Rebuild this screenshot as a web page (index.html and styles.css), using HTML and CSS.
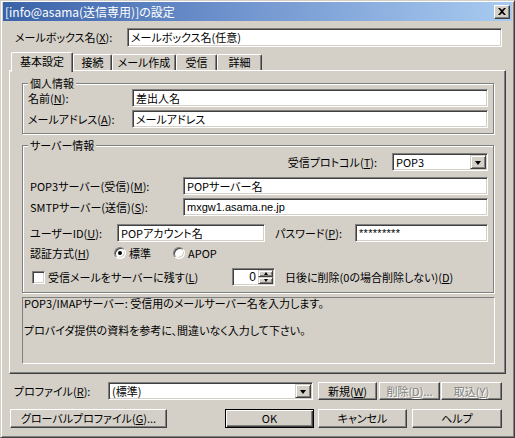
FILE: index.html
```html
<!DOCTYPE html>
<html lang="ja">
<head>
<meta charset="utf-8">
<title>[info@asama(送信専用)]の設定</title>
<link rel="stylesheet" href="styles.css">
</head>
<body>
<div class="window">
  <div class="titlebar">
    <span class="title">[info@asama(送信専用)]の設定</span>
    <span class="closebtn"><svg width="8" height="7" viewBox="0 0 8 7"><path d="M0 0h2l2 2 2-2h2L5 3.5 8 7H6L4 5 2 7H0l3-3.5z" fill="#000"/></svg></span>
  </div>
  <div class="content">
    <div class="mailbox-row">
      <span class="lbl w-mailbox">メールボックス名(<u>X</u>):</span>
      <div class="edit e-mailbox">メールボックス名(任意)</div>
    </div>
    <div class="tabs">
      <div class="tab sel t1">基本設定</div>
      <div class="tab t2">接続</div>
      <div class="tab t3">メール作成</div>
      <div class="tab t4">受信</div>
      <div class="tab t5">詳細</div>
    </div>
    <div class="panel">
      <fieldset class="group g1">
        <legend>個人情報</legend>
        <div class="row">
          <span class="lbl w-g1">名前(<u>N</u>):</span>
          <div class="edit grow">差出人名</div>
        </div>
        <div class="row r-gap3">
          <span class="lbl w-g1">メールアドレス(<u>A</u>):</span>
          <div class="edit grow">メールアドレス</div>
        </div>
      </fieldset>
      <fieldset class="group g2">
        <legend>サーバー情報</legend>
        <div class="row r-proto">
          <span class="lbl proto-lbl">受信プロトコル(<u>T</u>):</span>
          <div class="combo c-proto"><span class="combo-text">POP3</span><span class="dropbtn"><span class="tri-down"></span></span></div>
        </div>
        <div class="row r-pop">
          <span class="lbl w-srv">POP3サーバー(受信)(<u>M</u>):</span>
          <div class="edit grow">POPサーバー名</div>
        </div>
        <div class="row r-gap3 r-in">
          <span class="lbl w-srv">SMTPサーバー(送信)(<u>S</u>):</span>
          <div class="edit grow latin">mxgw1.asama.ne.jp</div>
        </div>
        <div class="row r-user r-in">
          <span class="lbl w-user">ユーザーID(<u>U</u>):</span>
          <div class="edit e-user">POPアカウント名</div>
          <span class="lbl w-pass">パスワード(<u>P</u>):</span>
          <div class="edit grow pass">*********</div>
        </div>
        <div class="row r-auth r-in">
          <span class="lbl w-auth">認証方式(<u>H</u>)</span>
          <span class="radio on"></span><span class="opt">標準</span>
          <span class="radio r2"></span><span class="opt">APOP</span>
        </div>
        <div class="row r-keep r-in">
          <span class="check"></span>
          <span class="lbl w-keep">受信メールをサーバーに残す(<u>L</u>)</span>
          <div class="spin"><span class="spin-val">0</span><span class="spin-btns"><span class="spin-up"><span class="tri-up-s"></span></span><span class="spin-dn"><span class="tri-down-s"></span></span></span></div>
          <span class="lbl days">日後に削除(0の場合削除しない)(<u>D</u>)</span>
        </div>
      </fieldset>
      <div class="info">
        <p class="l1">POP3/IMAPサーバー: 受信用のメールサーバー名を入力します。</p>
        <p class="l2">プロバイダ提供の資料を参考に、間違いなく入力して下さい。</p>
      </div>
    </div>
    <div class="profile-row">
      <span class="lbl w-prof">プロファイル(<u>R</u>):</span>
      <div class="combo c-prof"><span class="combo-text">(標準)</span><span class="dropbtn"><span class="tri-down"></span></span></div>
      <div class="btn b-new">新規(<u>W</u>)</div>
      <div class="btn dis b-del">削除(<u>D</u>)...</div>
      <div class="btn dis b-imp">取込(<u>Y</u>)</div>
    </div>
    <div class="button-row">
      <div class="btn b-global">グローバルプロファイル(<u>G</u>)...</div>
      <div class="btn def b-ok">OK</div>
      <div class="btn b-cancel">キャンセル</div>
      <div class="btn b-help">ヘルプ</div>
    </div>
  </div>
</div>
</body>
</html>
```
FILE: styles.css
```css
* { box-sizing: border-box; }
html, body { margin: 0; padding: 0; }
body {
  width: 515px;
  height: 438px;
  overflow: hidden;
  background: #d4d0c8;
  font-family: "Noto Sans CJK JP", "DejaVu Sans", sans-serif;
  font-size: 11px;
  font-weight: 400;
  font-feature-settings: "palt";
  color: #000;
}
u { text-decoration: underline; text-underline-offset: 1px; }

.window {
  width: 515px;
  height: 438px;
  background: #d4d0c8;
  border: 1px solid;
  border-color: #d4d0c8 #404040 #404040 #d4d0c8;
  box-shadow: inset 1px 1px #fff, inset -1px -1px #808080;
  padding: 1px 2px 2px 2px;
  display: flex;
  flex-direction: column;
}

.titlebar {
  height: 19px;
  flex: none;
  display: flex;
  align-items: center;
  padding: 0 2px 0 2px;
  background: linear-gradient(to right, #3a62a8 0%, #6f93cd 45%, #a8cbf1 100%);
}
.title {
  color: #fff;
  font-size: 12px;
  line-height: 14px;
  white-space: nowrap;
}
.closebtn {
  margin-left: auto;
  width: 16px;
  height: 14px;
  background: #d4d0c8;
  border: 1px solid;
  border-color: #fff #404040 #404040 #fff;
  box-shadow: inset -1px -1px #808080;
  display: flex;
  align-items: center;
  justify-content: center;
}
.closebtn svg { display: block; margin: 0 1px 1px 0; }

.content {
  flex: 1;
  display: flex;
  flex-direction: column;
}

.lbl { white-space: nowrap; flex: none; line-height: 13px; }

.edit, .combo, .spin {
  background: #fff;
  border: 1px solid;
  border-color: #808080 #fff #fff #808080;
  box-shadow: inset 1px 1px #404040, inset -1px -1px #d4d0c8;
  height: 18px;
  padding: 0 3px;
  display: flex;
  align-items: center;
  white-space: nowrap;
  overflow: hidden;
  line-height: 13px;
  flex: none;
}
.grow { flex: 1; }
.latin { font-family: "Liberation Sans", Arial, sans-serif; font-size: 11px; }
.pass { font-family: "Liberation Sans", Arial, sans-serif; font-size: 11px; letter-spacing: 0.3px; }

.mailbox-row {
  margin-top: 7px;
  height: 19px;
  padding-left: 12px;
  display: flex;
  align-items: center;
}
.w-mailbox { width: 112px; }
.e-mailbox { width: 375px; height: 19px; }

.tabs {
  margin-top: 5px;
  height: 18px;
  padding-left: 8px;
  display: flex;
  align-items: flex-end;
  position: relative;
  z-index: 1;
}
.tab {
  height: 16px;
  background: #d4d0c8;
  border-top: 1px solid #fff;
  border-left: 1px solid #fff;
  border-right: 1px solid #404040;
  box-shadow: inset -1px 0 #808080;
  border-radius: 2px 2px 0 0;
  display: flex;
  align-items: center;
  justify-content: center;
  white-space: nowrap;
  line-height: 13px;
}
.tab.sel { height: 20px; margin-bottom: -2px; padding-bottom: 3px; }
.t1 { width: 62px; }
.t2 { width: 39px; }
.t3 { width: 64px; }
.t4 { width: 41px; }
.t5 { width: 45px; }

.panel {
  margin-left: 6px;
  width: 497px;
  height: 304px;
  flex: none;
  border: 1px solid;
  border-color: #fff #404040 #404040 #fff;
  box-shadow: inset -1px -1px #808080;
  padding: 0 0 0 12px;
  display: flex;
  flex-direction: column;
  align-items: flex-start;
}

.group {
  width: 472px;
  margin: 0;
  border: 1px solid #808080;
  box-shadow: 1px 1px 0 #fff, inset 1px 1px 0 #fff;
  padding: 0 5px 5px 5px;
  min-width: 0;
}
.group legend {
  padding: 0 2px;
  line-height: 12px;
  height: 12px;
  background: #d4d0c8;
  white-space: nowrap;
}
.g1 { margin-top: 6px; }
.g2 { margin-top: 5px; padding-bottom: 6px; }

.row {
  height: 18px;
  display: flex;
  align-items: center;
}
.r-gap3 { margin-top: 3px; }
.r-in { padding-left: 2px; }
.w-g1 { width: 104px; }

.r-proto { margin-top: 2px; justify-content: flex-end; }
.proto-lbl { margin-right: 15px; }
.combo { padding: 0 0 0 3px; }
.combo-text { flex: 1; }
.c-proto { width: 96px; }
.dropbtn {
  width: 16px;
  height: 14px;
  margin: 1px 1px 1px 0;
  align-self: flex-start;
  margin-top: 1px;
  background: #d4d0c8;
  border: 1px solid;
  border-color: #d4d0c8 #404040 #404040 #d4d0c8;
  box-shadow: inset 1px 1px #fff, inset -1px -1px #808080;
  display: flex;
  align-items: center;
  justify-content: center;
  flex: none;
}
.tri-down {
  width: 0;
  height: 0;
  border-left: 3.5px solid transparent;
  border-right: 3.5px solid transparent;
  border-top: 4px solid #000;
  margin-top: 1px;
}

.r-pop { margin-top: 6px; padding-left: 2px; }
.w-srv { width: 153px; }

.r-user { margin-top: 8px; }
.w-user { width: 87px; }
.e-user { width: 148px; }
.w-pass { width: 80px; margin-left: 10px; }

.r-auth { margin-top: 2px; }
.w-auth { width: 84px; }
.radio {
  width: 12px;
  height: 12px;
  flex: none;
  border-radius: 50%;
  background: #fff;
  border: 1px solid;
  border-color: #808080 #fff #fff #808080;
  box-shadow: inset 1px 1px #404040, inset -1px -1px #d4d0c8;
  display: flex;
  align-items: center;
  justify-content: center;
}
.radio.on::after {
  content: "";
  width: 4px;
  height: 4px;
  border-radius: 50%;
  background: #000;
}
.opt { margin-left: 3px; line-height: 13px; white-space: nowrap; }
.r2 { margin-left: 22px; }

.r-keep { margin-top: 6px; }
.check {
  width: 13px;
  height: 13px;
  flex: none;
  margin-left: 2px;
  background: #fff;
  border: 1px solid;
  border-color: #808080 #fff #fff #808080;
  box-shadow: inset 1px 1px #404040, inset -1px -1px #d4d0c8;
}
.w-keep { width: 184px; margin-left: 3px; }
.spin { width: 43px; padding: 0 0 0 3px; }
.spin-val { flex: 1; text-align: right; padding-right: 2px; font-family: "Liberation Sans", Arial, sans-serif; font-size: 12px; }
.spin-btns {
  width: 15px;
  height: 14px;
  margin-right: 1px;
  align-self: flex-start;
  margin-top: 1px;
  display: flex;
  flex-direction: column;
  flex: none;
}
.spin-up, .spin-dn {
  flex: 1;
  background: #d4d0c8;
  border: 1px solid;
  border-color: #d4d0c8 #404040 #404040 #d4d0c8;
  box-shadow: inset 1px 1px #fff, inset -1px -1px #808080;
  display: flex;
  align-items: center;
  justify-content: center;
}
.tri-up-s {
  width: 0; height: 0;
  border-left: 2.5px solid transparent;
  border-right: 2.5px solid transparent;
  border-bottom: 3px solid #000;
}
.tri-down-s {
  width: 0; height: 0;
  border-left: 2.5px solid transparent;
  border-right: 2.5px solid transparent;
  border-top: 3px solid #000;
}
.days { margin-left: 10px; }

.info {
  margin-top: 4px;
  width: 473px;
  height: 67px;
  border: 1px solid;
  border-color: #808080 #fff #fff #808080;
  padding: 0 1px;
}
.info p { margin: 0; line-height: 13px; white-space: nowrap; }
.info .l1 { margin-top: -1px; }
.info .l2 { margin-top: 14px; }

.profile-row {
  margin-top: 8px;
  height: 18px;
  padding-left: 11px;
  display: flex;
  align-items: center;
}
.w-prof { width: 94px; }
.c-prof { width: 205px; }

.btn {
  background: #d4d0c8;
  border: 1px solid;
  border-color: #fff #404040 #404040 #fff;
  box-shadow: inset -1px -1px #808080;
  display: flex;
  align-items: center;
  justify-content: center;
  white-space: nowrap;
  line-height: 13px;
  flex: none;
}
.btn.dis { color: #808080; text-shadow: 1px 1px 0 #fff; }
.btn.def {
  border: 1px solid #000;
  box-shadow: inset 1px 1px #fff, inset -1px -1px #404040, inset -2px -2px #808080;
}
.profile-row .btn { height: 18px; }
.b-new { width: 59px; margin-left: 5px; }
.b-del { width: 61px; margin-left: 2px; }
.b-imp { width: 61px; margin-left: 1px; }

.button-row {
  margin-top: 9px;
  height: 19px;
  padding-left: 7px;
  display: flex;
  align-items: center;
}
.button-row .btn { height: 19px; }
.b-global { width: 157px; }
.b-ok { width: 89px; margin-left: 58px; }
.b-cancel { width: 89px; margin-left: 4px; }
.b-help { width: 90px; margin-left: 5px; }
```
